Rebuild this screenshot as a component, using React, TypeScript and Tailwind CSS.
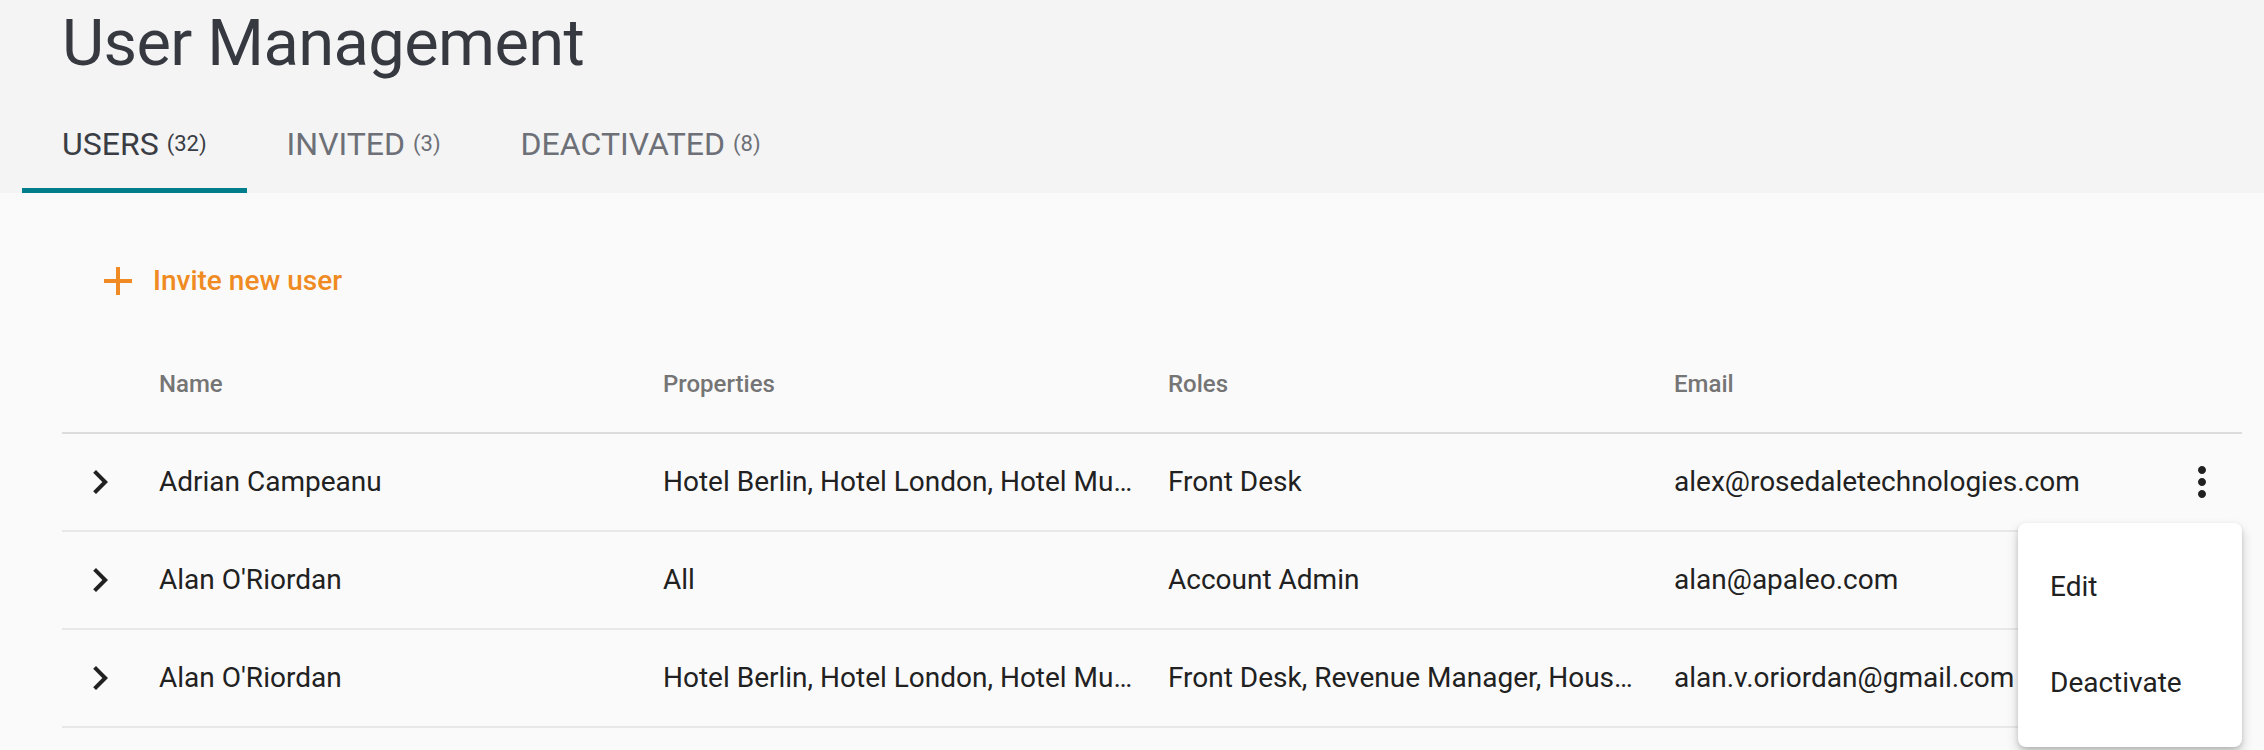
import React from "react"

const rows = [
  {
    name: "Adrian Campeanu",
    properties: "Hotel Berlin, Hotel London, Hotel Munich, Hotel Paris",
    roles: "Front Desk",
    email: "alex@rosedaletechnologies.com",
    menu: true,
  },
  {
    name: "Alan O'Riordan",
    properties: "All",
    roles: "Account Admin",
    email: "alan@apaleo.com",
    menu: false,
  },
  {
    name: "Alan O'Riordan",
    properties: "Hotel Berlin, Hotel London, Hotel Munich",
    roles: "Front Desk, Revenue Manager, Housekeeping",
    email: "alan.v.oriordan@gmail.com",
    menu: false,
  },
]

const tabs = [
  { label: "USERS", count: 32, active: true },
  { label: "INVITED", count: 3, active: false },
  { label: "DEACTIVATED", count: 8, active: false },
]

function ChevronRight() {
  return (
    <svg width="48" height="48" viewBox="0 0 24 24" fill="#212121">
      <path d="M10 6L8.59 7.41 13.17 12l-4.58 4.59L10 18l6-6z" />
    </svg>
  )
}

function MoreVert() {
  return (
    <svg width="48" height="48" viewBox="0 0 24 24" fill="#212121">
      <path d="M12 8c1.1 0 2-.9 2-2s-.9-2-2-2-2 .9-2 2 .9 2 2 2zm0 2c-1.1 0-2 .9-2 2s.9 2 2 2 2-.9 2-2-.9-2-2-2zm0 6c-1.1 0-2 .9-2 2s.9 2 2 2 2-.9 2-2-.9-2-2-2z" />
    </svg>
  )
}

function AddIcon() {
  return (
    <svg width="48" height="48" viewBox="0 0 24 24" fill="#ef8b22">
      <path d="M19 13h-6v6h-2v-6H5v-2h6V5h2v6h6v2z" />
    </svg>
  )
}

const cols = "grid grid-cols-[97px_504px_505px_506px_1fr_80px]"

export default function App() {
  return (
    <div
      className="w-full min-h-[750px] bg-[#fafafa] text-[#212121]"
      style={{ fontFamily: "Roboto, 'Noto Sans', sans-serif" }}
    >
      {/* header */}
      <div className="bg-[#f4f4f4]">
        <div className="h-[96px] pt-[3px] pl-[62px]">
          <h1 className="text-[65px] leading-[80px] font-normal tracking-[-0.6px] text-[#363940]">User Management</h1>
        </div>
        <div className="flex h-[97px] pl-[22px]">
          {tabs.map(tab => (
            <div key={tab.label} className="flex flex-col">
              <div className="flex flex-1 items-center px-10 pt-[3px]">
                <span className={`text-[32px] ${tab.active ? "text-[#3a3d44]" : "text-[#6d7077]"}`}>
                  {tab.label}
                </span>
                <span className={`ml-[8px] text-[22px] ${tab.active ? "text-[#3a3d44]" : "text-[#6d7077]"}`}>
                  ({tab.count})
                </span>
              </div>
              <div className={`h-[5px] ${tab.active ? "bg-[#007e8c]" : "bg-transparent"}`} />
            </div>
          ))}
        </div>
      </div>

      {/* content */}
      <div className="px-[22px] pt-[40px]">
        <button className="flex h-[96px] items-center pl-[72px] text-[28px] font-medium text-[#ef8b22]">
          <AddIcon />
          <span className="ml-[11px]">Invite new user</span>
        </button>

        <div className="mt-[7px] ml-[40px]">
          <div className={`${cols} h-[98px] items-center border-b-2 border-[#dcdcdc] text-[24px] font-medium text-[#757575]`}>
            <div />
            <div>Name</div>
            <div>Properties</div>
            <div>Roles</div>
            <div>Email</div>
            <div />
          </div>

          {rows.map((row, i) => (
            <div
              key={i}
              className={`${cols} relative h-[98px] items-center border-b-2 border-[#e8e8e8] text-[28px]`}
            >
              <div className="pl-[14px]">
                <ChevronRight />
              </div>
              <div className="truncate pr-10">{row.name}</div>
              <div className="truncate pr-[32px]">{row.properties}</div>
              <div className="truncate pr-10">{row.roles}</div>
              <div className="whitespace-nowrap">{row.email}</div>
              <div className="flex justify-center">{row.menu && <MoreVert />}</div>

              {row.menu && (
                <div className="absolute right-0 top-[89px] z-10 w-[224px] rounded-[8px] bg-white py-4 shadow-[0_6px_12px_rgba(0,0,0,0.2),0_2px_4px_rgba(0,0,0,0.12)]">
                  <div className="flex h-[96px] items-center px-8 text-[28px]">Edit</div>
                  <div className="flex h-[96px] items-center px-8 text-[28px]">Deactivate</div>
                </div>
              )}
            </div>
          ))}
        </div>
      </div>
    </div>
  )
}
